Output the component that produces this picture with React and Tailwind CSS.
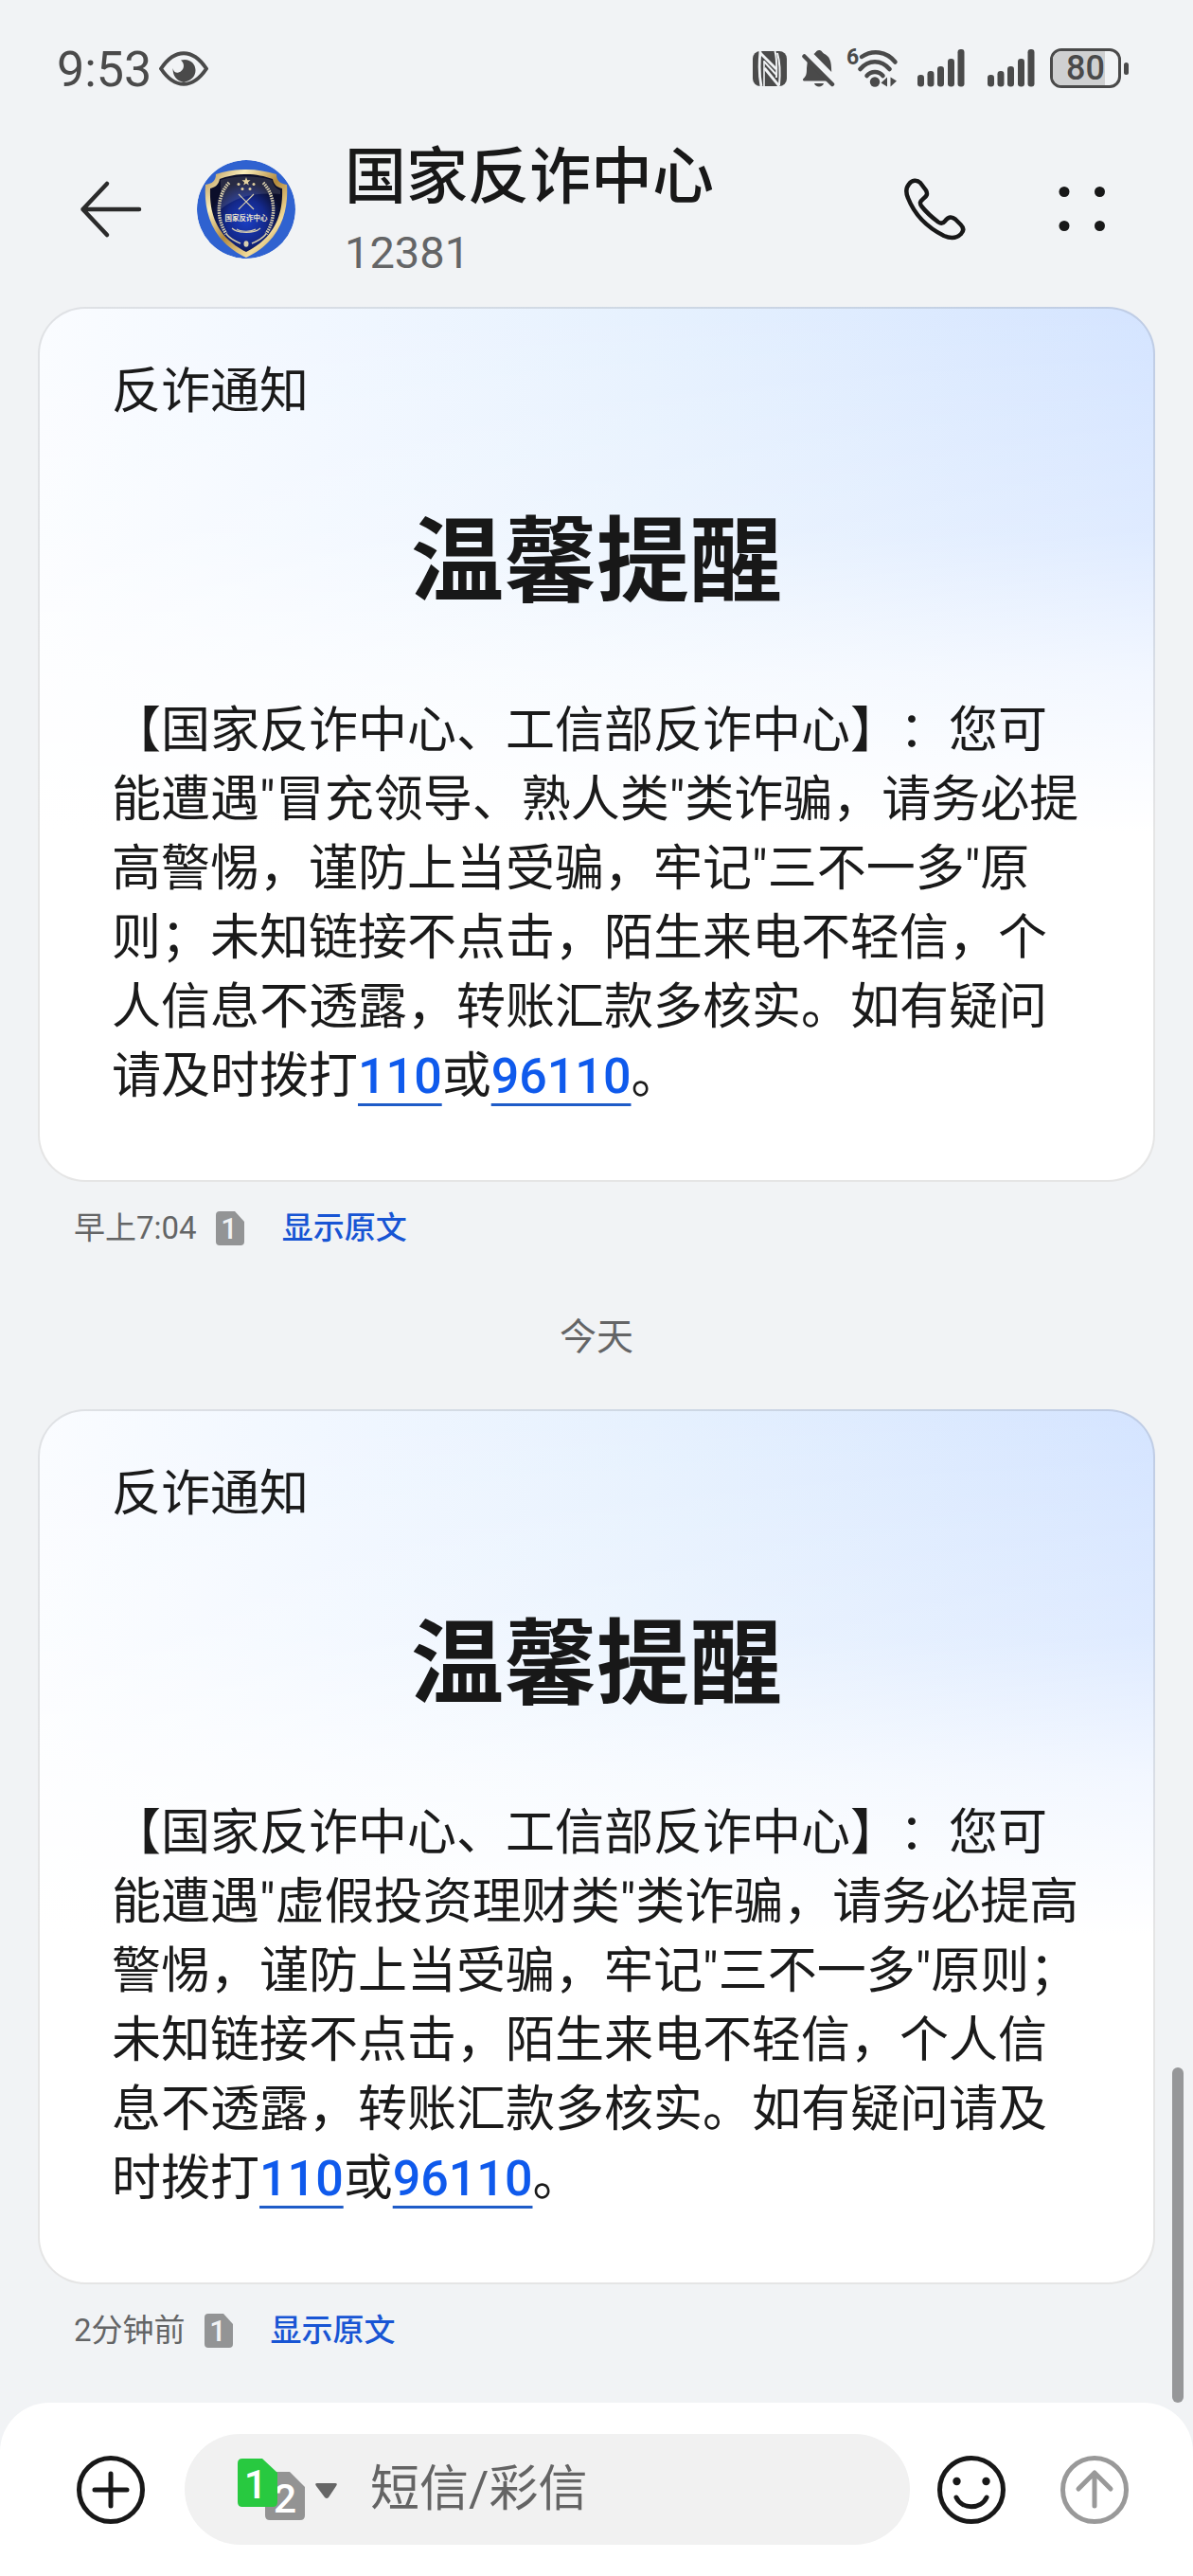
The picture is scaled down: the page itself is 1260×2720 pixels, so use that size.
import React, { useState } from 'react';

const EyeIcon = () => (
  <svg viewBox="0 0 52 37" className="h-[37px] w-[52px] text-[#4a4a4a]" aria-hidden="true">
    <path d="M2 18.5 C9 8 17 2.2 26 2.2 S43 8 50 18.5 C43 29 35 34.8 26 34.8 S9 29 2 18.5 Z" fill="none" stroke="currentColor" strokeWidth="4" strokeLinejoin="round" />
    <path d="M23 9.5 C32 7 38.5 13 38.5 20 C38.5 26 35 31 26 33 C18 31 14.5 26 14.5 18 C15.5 22 18 23.4 20.5 22.6 C26.5 20.8 28 13.6 23 9.5 Z" fill="currentColor" />
  </svg>
);

const NfcIcon = () => (
  <svg viewBox="0 0 36 37" className="h-[37px] w-9" aria-hidden="true">
    <rect width="36" height="37" rx="8" fill="#4a4a4a" />
    <g fill="none" stroke="#f1f3f5" strokeWidth="2.8">
      <path d="M8 0 C7 10 6.500 25 9 37" />
      <path d="M8 2 L25 19" />
      <path d="M12 11 L25 25" strokeWidth="2" />
      <path d="M12.500 18 L28 37" />
      <path d="M12 10 V37" strokeWidth="1.600" />
      <path d="M23.500 0 C25.500 8 25.500 18 25 28" strokeWidth="2" />
      <path d="M26 2 C29 12 29 25 28 36" strokeWidth="2" />
    </g>
  </svg>
);

const BellOffIcon = () => (
  <svg viewBox="0 0 35 40" className="h-10 w-[35px]" fill="#4a4a4a" aria-hidden="true">
    <path d="M12.500 5 C14.500 4 15 1 18 1 C21 1 21.500 3.600 23 4.500 C29.500 7.500 31 12 31.200 24 Z" />
    <path d="M6 11 L29 33.500 H3 C0.500 33.500 0.500 31.500 2 30.500 C5 28 5 24 5 20 Z" />
    <path d="M2.500 7.500 L32 37" stroke="#4a4a4a" strokeWidth="4.500" strokeLinecap="round" />
    <path d="M13 36 H23 C22 40.500 14 40.500 13 36 Z" />
  </svg>
);

const WifiIcon = () => (
  <div className="flex h-[42px] w-[55px]">
    <span className="w-3 text-[23px] leading-5 font-bold">6</span>
    <svg viewBox="12 0 43 42" className="h-[42px] w-[43px]" fill="none" stroke="#4a4a4a" aria-hidden="true">
      <g strokeWidth="4.500" strokeLinecap="round">
        <path d="M16 9 C27 1.500 42 2.500 51.500 14.500" />
        <path d="M14.500 22 C23 11.500 37 11.500 45.500 22" />
        <path d="M21.500 29 C26 23.500 34 23.500 38.500 29" />
      </g>
      <circle cx="30" cy="35.500" r="5.200" fill="#4a4a4a" stroke="none" />
      <path d="M43 30.500 V40.500 L36.500 36.500 Z M46.500 40.500 V30.500 L53 34.500 Z" fill="#4a4a4a" stroke="none" />
    </svg>
  </div>
);

const SignalIcon = () => (
  <svg viewBox="0 0 50 40" className="h-10 w-[50px]" fill="#4a4a4a" aria-hidden="true">
    <rect x="0" y="27" width="7" height="12.500" rx="3.200" />
    <rect x="10.500" y="23" width="7" height="16.500" rx="3.200" />
    <rect x="21" y="18" width="7" height="21.500" rx="3.200" />
    <rect x="32" y="10" width="7" height="29.500" rx="3.200" />
    <rect x="42.500" y="0" width="7" height="39.500" rx="3.200" />
  </svg>
);

const Battery = ({ level }) => (
  <div className="flex items-center gap-[3px]" aria-label={`${level}%`}>
    <div className="relative h-[42px] w-[75px] overflow-hidden rounded-xl border-[3px] border-[#4a4a4a]">
      <div className="h-full bg-[#cfd0d1]" style={{ width: `${level}%` }} />
      <span className="absolute inset-0 flex items-center justify-center text-[36px] leading-none font-medium">{level}</span>
    </div>
    <div className="h-[13px] w-[5px] rounded-full bg-[#4a4a4a]" />
  </div>
);

const StatusBar = () => (
  <div className="flex items-center justify-between pt-[50px] pr-[68px] pb-6 pl-[60px] text-[#4a4a4a]">
    <div className="flex h-11 items-center gap-2">
      <span className="pt-1 text-[52px] leading-11">9:53</span>
      <EyeIcon />
    </div>
    <div className="flex h-11 items-center">
      <NfcIcon />
      <div className="ml-4"><BellOffIcon /></div>
      <div className="ml-3"><WifiIcon /></div>
      <div className="ml-5"><SignalIcon /></div>
      <div className="ml-6"><SignalIcon /></div>
      <div className="ml-4"><Battery level={80} /></div>
    </div>
  </div>
);

const Avatar = () => (
  <svg viewBox="0 0 104 104" className="ml-[58px] size-[104px] shrink-0 rounded-full" aria-hidden="true">
    <defs>
      <linearGradient id="gold" x1="0" y1="0" x2="1" y2="1">
        <stop offset="0" stopColor="#b08c4a" />
        <stop offset="0.25" stopColor="#fbeebb" />
        <stop offset="0.5" stopColor="#b48a3c" />
        <stop offset="0.75" stopColor="#f3dc9a" />
        <stop offset="1" stopColor="#8a6424" />
      </linearGradient>
      <radialGradient id="field" cx="0.5" cy="0.6" r="0.5">
        <stop offset="0" stopColor="#1a3fc4" />
        <stop offset="0.55" stopColor="#14298c" />
        <stop offset="1" stopColor="#0b0e2a" />
      </radialGradient>
    </defs>
    <circle cx="52" cy="52" r="52" fill="#2f62d0" />
    <path d="M52 10 C64 10 74 12 84 15 C84 22 88 25 95 26 C97 55 88 86 52 103 C16 86 7 55 9 26 C16 25 20 22 20 15 C30 12 40 10 52 10 Z" fill="url(#gold)" />
    <path d="M52 15 C63 15 71 17 80 20 C81 26 85 29 90 30 C91 55 84 81 52 97 C20 81 13 55 14 30 C19 29 23 26 24 20 C33 17 41 15 52 15 Z" fill="url(#field)" />
    <path d="M25 52 C40 39 60 34 88 36 L88 32 C84 30 81 28 79 21 C62 16 42 16 25 21 Z" fill="#ffffff" opacity="0.12" />
    <g fill="none" stroke="#d9cfae" strokeWidth="3.500" strokeDasharray="1.600 1">
      <path d="M34 24 C22 36 19 60 31 78" />
      <path d="M70 24 C82 36 85 60 73 78" />
    </g>
    <g fill="none" stroke="#d9cfae" strokeWidth="1.500">
      <path d="M31 78 C35 83 41 86 46 88 M73 78 C69 83 63 86 58 88" />
      <path d="M44 36 L60 52 M60 36 L44 52" strokeWidth="1.200" />
      <path d="M37 72 C44 78 60 78 67 72 M42 73 C47 76 57 76 62 73" strokeWidth="1.200" />
    </g>
    <ellipse cx="52" cy="88.500" rx="2.500" ry="3.200" fill="#d9cfae" />
    <g fill="#e5d3a0">
      <path d="M52 18 L53.200 21.200 L56.500 21.300 L53.900 23.400 L54.800 26.600 L52 24.700 L49.200 26.600 L50.100 23.400 L47.500 21.300 L50.800 21.200 Z" />
      <circle cx="44" cy="25.500" r="1.500" />
      <circle cx="60" cy="25.500" r="1.500" />
      <circle cx="48" cy="30.500" r="1.500" />
      <circle cx="56" cy="30.500" r="1.500" />
    </g>
    <text x="52" y="64" fontSize="7.500" fontWeight="700" textAnchor="middle" fill="#efe7cc">国家反诈中心</text>
  </svg>
);

const Header = () => (
  <header className="flex h-[206px] items-center px-[84px]">
    <button aria-label="返回" className="shrink-0">
      <svg viewBox="0 0 66 66" className="size-[66px]" fill="none" stroke="#2b2b2b" strokeWidth="4.500" strokeLinecap="round" strokeLinejoin="round">
        <path d="M29 6 L3.500 33 L29 60 M3.500 33 H63" />
      </svg>
    </button>
    <Avatar />
    <div className="ml-[52px] min-w-0 flex-1 pt-2">
      <h1 className="text-[65px] leading-[84px] font-medium text-[#181818]">国家反诈中心</h1>
      <p className="text-[47px] leading-[76px] text-[#646566]">12381</p>
    </div>
    <div className="flex gap-[90px]">
      <button aria-label="拨打电话">
        <svg viewBox="0 0 66 66" className="size-[66px]" fill="none" stroke="#181818" strokeWidth="4.500" strokeLinejoin="round">
          <path d="M6 6.500 C9 2 14.500 1.500 18 5 L24 13 C26 17 25 19 21 22 C17.500 25 17 26.500 19.500 30 C25 37 31 42 37 46.500 C40 48.500 42 48 44 45.500 C47.500 40.500 51.500 40.500 55 43.500 L60.500 49 C64 52.500 64 56 61 59 C56 64 50 64 43 61 C25 52 12 39 5 21 C2 14 3 10 6 6.500 Z" />
        </svg>
      </button>
      <button aria-label="更多">
        <svg viewBox="0 0 66 66" className="size-[66px]" fill="#181818">
          <circle cx="14" cy="14.500" r="5.500" />
          <circle cx="51.500" cy="14.500" r="5.500" />
          <circle cx="14" cy="50.500" r="5.500" />
          <circle cx="51.500" cy="50.500" r="5.500" />
        </svg>
      </button>
    </div>
  </header>
);

const SimBadge = () => (
  <svg viewBox="0 0 30 36" className="h-9 w-[30px]" role="img" aria-label="1">
    <path d="M4 0 H20 L30 11 V32 Q30 36 26 36 H4 Q0 36 0 32 V4 Q0 0 4 0 Z" fill="#939495" />
    <text x="14" y="29" fontSize="31" fontWeight="500" textAnchor="middle" fill="#f1f3f5" fontFamily="Roboto, sans-serif">1</text>
  </svg>
);

const MessageCard = ({ topic, time }) => (
  <article>
    <div className="rounded-[50px] border-2 border-black/10 bg-[linear-gradient(to_bottom,#ffffff00_0%,#ffffff40_26%,#ffffffb3_42%,#ffffff_60%),linear-gradient(to_right,#fafcff_0%,#f1f7ff_25%,#e6f1fe_55%,#d4e4ff_100%)] bg-origin-border px-[76px] pb-[73px]">
      <p className="pt-[50px] text-[52px] leading-[76px] text-[#1a1a1a]">反诈通知</p>
      <h2 className="mt-[72px] text-center text-[98px] leading-[140px] font-bold text-[#181818]">温馨提醒</h2>
      <p className="mt-[71px] text-[52px] leading-[73px] text-[#1a1a1a] [text-spacing-trim:space-all]">
        【国家反诈中心、工信部反诈中心】：您可能遭遇"{topic}"类诈骗，请务必提高警惕，谨防上当受骗，牢记"三不一多"原则；未知链接不点击，陌生来电不轻信，个人信息不透露，转账汇款多核实。如有疑问请及时拨打
        <a href="tel:110" className="font-medium text-[#0f5aec] underline decoration-[#1f5cc8] decoration-3 underline-offset-[11px]">110</a>
        或
        <a href="tel:96110" className="font-medium text-[#0f5aec] underline decoration-[#1f5cc8] decoration-3 underline-offset-[11px]">96110</a>
        。
      </p>
    </div>
    <div className="flex h-[98px] items-center px-[38px] text-[33px]">
      <time className="mr-5 text-[#646566]">{time}</time>
      <SimBadge />
      <button className="ml-10 font-medium text-[#1855d4]">显示原文</button>
    </div>
  </article>
);

const SimPicker = () => (
  <button aria-label="切换 SIM 卡" className="shrink-0">
    <svg viewBox="0 0 106 66" className="h-[66px] w-[106px]" fontFamily="Roboto, sans-serif" fontWeight="500" fontSize="43" textAnchor="middle">
      <path d="M34 14 H55 L71 30 V60 Q71 65 66 65 H34 Q29 65 29 60 V19 Q29 14 34 14 Z" fill="#939393" />
      <text x="50" y="57" fill="#ffffff">2</text>
      <path d="M5 0 H26 L42 15 V46 Q42 51 37 51 H5 Q0 51 0 46 V5 Q0 0 5 0 Z" fill="#28c940" />
      <text x="19" y="42" fill="#ffffff">1</text>
      <path d="M84 26 H103 Q106 26 104 29 L96 41 Q94 43 92 41 L83 29 Q81 26 84 26 Z" fill="#666666" />
    </svg>
  </button>
);

const Composer = () => {
  const [draft, setDraft] = useState('');

  return (
    <footer className="flex items-center rounded-t-[52px] bg-white py-[33px] pr-[68px] pl-[81px]">
      <button aria-label="添加" className="shrink-0">
        <svg viewBox="0 0 72 72" className="size-[72px]" fill="none" stroke="#181818" strokeWidth="5" strokeLinecap="round">
          <circle cx="36" cy="36" r="33.500" />
          <path d="M36 19 V53 M19 36 H53" />
        </svg>
      </button>
      <div className="ml-[42px] flex h-[117px] min-w-0 flex-1 items-center rounded-full bg-[#f1f1f1] pl-14">
        <SimPicker />
        <input
          type="text"
          aria-label="短信内容"
          placeholder="短信/彩信"
          value={draft}
          onChange={(e) => setDraft(e.target.value)}
          className="ml-[34px] min-w-0 flex-1 bg-transparent text-[52px] leading-[76px] outline-none placeholder:text-[#646464]"
        />
      </div>
      <button aria-label="表情" className="ml-[29px] shrink-0">
        <svg viewBox="0 0 72 72" className="size-[72px]" fill="none" stroke="#181818" strokeWidth="5" strokeLinecap="round">
          <circle cx="36" cy="36" r="33.500" />
          <path d="M20 44 C26 57 46 57 52 44" />
          <circle cx="20.500" cy="27" r="4.200" fill="#181818" stroke="none" />
          <circle cx="51.500" cy="27" r="4.200" fill="#181818" stroke="none" />
        </svg>
      </button>
      <button aria-label="发送" className="ml-[58px] shrink-0">
        <svg viewBox="0 0 72 72" className="size-[72px]" fill="none" stroke="#999999" strokeWidth="5" strokeLinecap="round" strokeLinejoin="round">
          <circle cx="36" cy="36" r="33.500" />
          <path d="M36 53 V18 M19 35 L36 18 L53 35" />
        </svg>
      </button>
    </footer>
  );
};

export default function App() {
  return (
    <div lang="zh-CN" className="flex min-h-screen flex-col bg-[#f1f3f5] font-[Roboto,'Noto_Sans_CJK_SC',sans-serif]">
      <StatusBar />
      <Header />
      <main className="relative flex-1 px-10 pb-[27px]">
        <MessageCard topic="冒充领导、熟人类" time="早上7:04" />
        <p className="pt-9 pb-[46px] text-center text-[39px] leading-[60px] text-[#646566]">今天</p>
        <MessageCard topic="虚假投资理财类" time="2分钟前" />
        <div className="absolute right-[10px] bottom-0 h-[16%] w-3 rounded-full bg-[#969799]" />
      </main>
      <Composer />
    </div>
  );
}
